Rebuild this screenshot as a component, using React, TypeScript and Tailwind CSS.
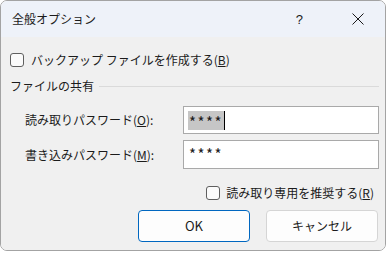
import React from 'react';

const font = { fontFamily: '"Noto Sans CJK JP", "Noto Sans", sans-serif' };

function CheckBox() {
    return <div className="w-[14px] h-[14px] rounded-[3px] border border-[#5f5f5f] bg-[#fbfbfb] shrink-0" />;
}

export default function App() {
    return (
        <div className="w-[388px] h-[253px] bg-white text-[12px] text-[#1b1b1b]" style={font}>
            <div className="w-[386px] h-[251px] rounded-[7px] border border-[#a3a3a3] overflow-hidden flex flex-col">
                {/* title bar */}
                <div className="h-[36px] bg-[#eef2f9] flex items-center shrink-0">
                    <span className="ml-[11px] text-[12px] leading-none">全般オプション</span>
                    <span className="ml-auto mr-[49px] text-[13px] leading-none" style={{ fontFamily: '"Liberation Sans", sans-serif' }}>?</span>
                    <svg width="12" height="12" viewBox="0 0 12 12" className="mr-[21px]">
                        <path d="M0.5 0.5 L11.5 11.5 M11.5 0.5 L0.5 11.5" stroke="#1a1a1a" strokeWidth="1" />
                    </svg>
                </div>

                {/* body */}
                <div className="flex-1 bg-[#f0f0f0] flex flex-col pl-[9px] pr-[6px]">
                    <div className="mt-[13px] h-[20px] flex items-center gap-[7px]">
                        <CheckBox />
                        <span>バックアップ ファイルを作成する(<span className="underline">B</span>)</span>
                    </div>

                    <div className="mt-[6px] h-[20px] flex items-center">
                        <span>ファイルの共有</span>
                        <div className="flex-1 h-px bg-[#dadada] ml-[5px]" />
                    </div>

                    <div className="mt-[10px] h-[28px] flex items-center">
                        <span className="ml-[15px]">読み取りパスワード(<span className="underline">O</span>):</span>
                        <div className="ml-auto w-[196px] h-[28px] bg-white border border-[#a9a9a9] flex items-center pl-[4px]">
                            <span className="bg-[#c6c6c6] h-[19px] w-[36px] flex items-start justify-center tracking-[1.5px] text-[15px] leading-none pt-[3px]">****</span>
                            <span className="w-px h-[19px] bg-black" />
                        </div>
                    </div>

                    <div className="mt-[6px] h-[29px] flex items-center">
                        <span className="ml-[15px]">書き込みパスワード(<span className="underline">M</span>):</span>
                        <div className="ml-auto w-[196px] h-[29px] bg-white border border-[#a9a9a9] flex items-start pl-[5px] pt-[3px]">
                            <span className="tracking-[1.5px] text-[15px] leading-none pt-[2px]">****</span>
                        </div>
                    </div>

                    <div className="mt-[14px] h-[20px] flex items-center justify-end gap-[6px] pr-[5px]">
                        <CheckBox />
                        <span>読み取り専用を推奨する(<span className="underline">R</span>)</span>
                    </div>

                    <div className="mt-[7px] flex justify-end gap-[16px] pr-px">
                        <button className="w-[112px] h-[32px] rounded-[4px] bg-[#fdfdfd] border border-[#0067c0] text-[13px]">OK</button>
                        <button className="w-[112px] h-[32px] rounded-[4px] bg-[#fdfdfd] border border-[#d5d5d5] text-[12px]">キャンセル</button>
                    </div>
                </div>
            </div>
        </div>
    );
}
